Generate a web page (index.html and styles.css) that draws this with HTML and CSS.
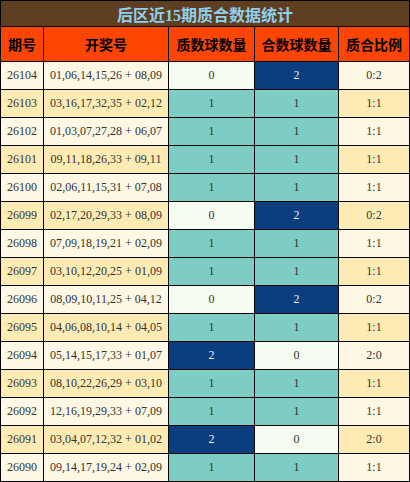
FILE: index.html
```html
<!DOCTYPE html>
<html lang="zh-CN">
<head>
    <meta charset="UTF-8">
    <meta name="viewport" content="width=device-width, initial-scale=1.0">
    <title>后区近15期质合数据统计</title>
    <link rel="stylesheet" href="styles.css">
</head>
<body>

    <table class="stats">
        <colgroup>
            <col class="c-issue">
            <col class="c-draw">
            <col class="c-prime">
            <col class="c-comp">
            <col class="c-ratio">
        </colgroup>
        <tr class="title-row">
            <td colspan="5">后区近15期质合数据统计</td>
        </tr>
        <tr class="head-row">
            <th>期号</th>
            <th>开奖号</th>
            <th>质数球数量</th>
            <th>合数球数量</th>
            <th>质合比例</th>
        </tr>
        <tr class="odd"><td>26104</td><td>01,06,14,15,26 + 08,09</td><td class="v0">0</td><td class="v2">2</td><td>0:2</td></tr>
        <tr class="even"><td>26103</td><td>03,16,17,32,35 + 02,12</td><td class="v1">1</td><td class="v1">1</td><td>1:1</td></tr>
        <tr class="odd"><td>26102</td><td>01,03,07,27,28 + 06,07</td><td class="v1">1</td><td class="v1">1</td><td>1:1</td></tr>
        <tr class="even"><td>26101</td><td>09,11,18,26,33 + 09,11</td><td class="v1">1</td><td class="v1">1</td><td>1:1</td></tr>
        <tr class="odd"><td>26100</td><td>02,06,11,15,31 + 07,08</td><td class="v1">1</td><td class="v1">1</td><td>1:1</td></tr>
        <tr class="even"><td>26099</td><td>02,17,20,29,33 + 08,09</td><td class="v0">0</td><td class="v2">2</td><td>0:2</td></tr>
        <tr class="odd"><td>26098</td><td>07,09,18,19,21 + 02,09</td><td class="v1">1</td><td class="v1">1</td><td>1:1</td></tr>
        <tr class="even"><td>26097</td><td>03,10,12,20,25 + 01,09</td><td class="v1">1</td><td class="v1">1</td><td>1:1</td></tr>
        <tr class="odd"><td>26096</td><td>08,09,10,11,25 + 04,12</td><td class="v0">0</td><td class="v2">2</td><td>0:2</td></tr>
        <tr class="even"><td>26095</td><td>04,06,08,10,14 + 04,05</td><td class="v1">1</td><td class="v1">1</td><td>1:1</td></tr>
        <tr class="odd"><td>26094</td><td>05,14,15,17,33 + 01,07</td><td class="v2">2</td><td class="v0">0</td><td>2:0</td></tr>
        <tr class="even"><td>26093</td><td>08,10,22,26,29 + 03,10</td><td class="v1">1</td><td class="v1">1</td><td>1:1</td></tr>
        <tr class="odd"><td>26092</td><td>12,16,19,29,33 + 07,09</td><td class="v1">1</td><td class="v1">1</td><td>1:1</td></tr>
        <tr class="even"><td>26091</td><td>03,04,07,12,32 + 01,02</td><td class="v2">2</td><td class="v0">0</td><td>2:0</td></tr>
        <tr class="odd"><td>26090</td><td>09,14,17,19,24 + 02,09</td><td class="v1">1</td><td class="v1">1</td><td>1:1</td></tr>
    </table>

</body>
</html>
```
FILE: styles.css
```css
body {
    margin: 0;
    font-family: "Liberation Serif", "Noto Sans CJK SC", serif;
    background: #ffffff;
}

.stats {
    width: 410px;
    border-collapse: collapse;
    table-layout: fixed;
}

.c-issue { width: 43px; }
.c-draw  { width: 125px; }
.c-prime { width: 86px; }
.c-comp  { width: 84px; }

.stats td,
.stats th {
    border: 1px solid #000;
    padding: 0;
    text-align: center;
}

.title-row td {
    height: 25px;
    background: #5e3f22;
    color: #8ed0ee;
    font-size: 16px;
    font-weight: bold;
}

.head-row th {
    height: 34px;
    background: #ff4500;
    color: #000;
    font-size: 14px;
    font-weight: bold;
}

.odd td,
.even td {
    height: 27px;
    font-size: 12px;
    color: #333;
}

.odd td  { background: #fff8e4; }
.even td { background: #ffebb4; }

/* ball counts */
.stats td.v0 { background: #f5fcf0; }
.stats td.v1 { background: #7dcdc4; }
.stats td.v2 { background: #0b3e7e; color: #e8eef6; }
```
